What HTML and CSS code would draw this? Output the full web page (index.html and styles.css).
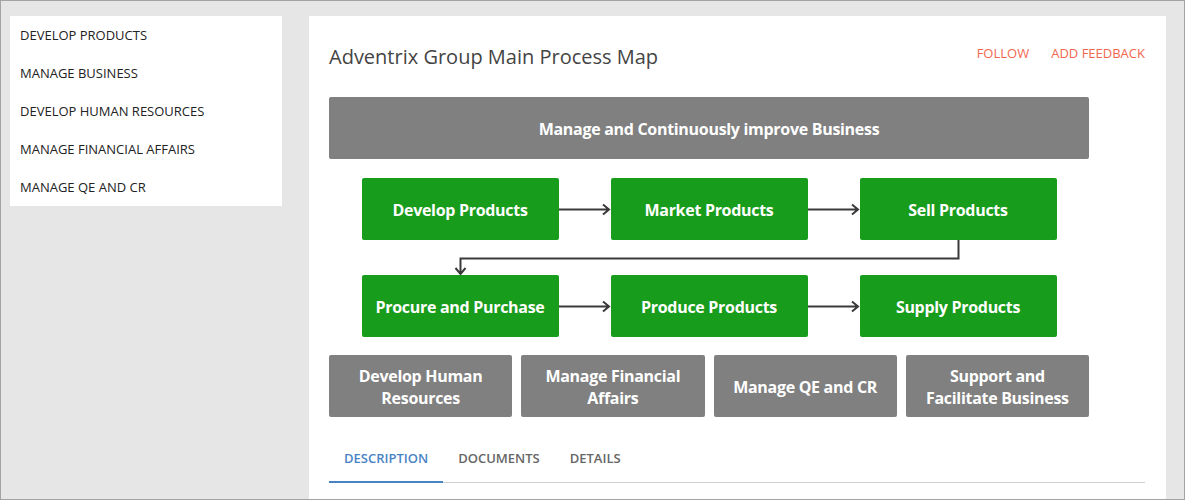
FILE: index.html
```html
<!DOCTYPE html>
<html lang="en">
<head>
    <meta charset="UTF-8">
    <meta name="viewport" content="width=device-width, initial-scale=1.0">
    <title>Adventrix Group Main Process Map</title>
    <link rel="stylesheet" href="styles.css">
</head>
<body>
    <div class="frame">
        <ul class="sidebar">
            <li>DEVELOP PRODUCTS</li>
            <li>MANAGE BUSINESS</li>
            <li>DEVELOP HUMAN RESOURCES</li>
            <li>MANAGE FINANCIAL AFFAIRS</li>
            <li>MANAGE QE AND CR</li>
        </ul>

        <div class="main">
            <div class="header">
                <h1 class="title">Adventrix Group Main Process Map</h1>
                <div class="actions">
                    <a href="#">FOLLOW</a>
                    <a href="#">ADD FEEDBACK</a>
                </div>
            </div>

            <div class="map">
                <div class="box box-gray box-top">Manage and Continuously improve Business</div>

                <div class="flow">
                    <div class="box box-green">Develop Products</div>
                    <svg class="arrow" viewBox="0 0 52 62"><path d="M0 31.5H50M44 26.5L50 31.5L44 36.5"/></svg>
                    <div class="box box-green">Market Products</div>
                    <svg class="arrow" viewBox="0 0 52 62"><path d="M0 31.5H50M44 26.5L50 31.5L44 36.5"/></svg>
                    <div class="box box-green">Sell Products</div>
                </div>

                <svg class="connector" viewBox="0 0 695 35"><path d="M596.5 0V18.5H98.5V34M93.5 28L98.5 34L103.5 28"/></svg>

                <div class="flow">
                    <div class="box box-green">Procure and Purchase</div>
                    <svg class="arrow" viewBox="0 0 52 62"><path d="M0 31.5H50M44 26.5L50 31.5L44 36.5"/></svg>
                    <div class="box box-green">Produce Products</div>
                    <svg class="arrow" viewBox="0 0 52 62"><path d="M0 31.5H50M44 26.5L50 31.5L44 36.5"/></svg>
                    <div class="box box-green">Supply Products</div>
                </div>

                <div class="support">
                    <div class="box box-gray">Develop Human<br>Resources</div>
                    <div class="box box-gray">Manage Financial<br>Affairs</div>
                    <div class="box box-gray">Manage QE and CR</div>
                    <div class="box box-gray">Support and<br>Facilitate Business</div>
                </div>
            </div>

            <div class="tabs">
                <span class="tab active">DESCRIPTION</span>
                <span class="tab">DOCUMENTS</span>
                <span class="tab">DETAILS</span>
            </div>
        </div>
    </div>
</body>
</html>
```

FILE: styles.css
```css
body {
    margin: 0;
    font-family: "Open Sans", "Liberation Sans", sans-serif;
    background-color: #e6e6e6;
}

.frame {
    height: 500px;
    box-sizing: border-box;
    border: 1px solid #a3a3a3;
    padding: 15px 18px 0 9px;
    display: flex;
    align-items: flex-start;
    gap: 27px;
    overflow: hidden;
}

.sidebar {
    width: 272px;
    flex-shrink: 0;
    margin: 0;
    padding: 0;
    list-style: none;
    background-color: #fff;
}

.sidebar li {
    height: 37px;
    line-height: 37px;
    padding: 1px 0 0 10px;
    font-size: 13px;
    color: #222;
}

.main {
    flex: 1;
    height: 484px;
    background-color: #fff;
    padding: 27px 21px 0 20px;
}

.header {
    display: flex;
    justify-content: space-between;
    align-items: flex-start;
}

.title {
    margin: 0;
    font-size: 20px;
    line-height: 28px;
    font-weight: 400;
    color: #444;
}

.actions {
    display: flex;
    gap: 22px;
    padding-top: 1px;
}

.actions a {
    font-size: 13px;
    line-height: 18px;
    color: #f26650;
    text-decoration: none;
}

.map {
    width: 760px;
    margin-top: 26px;
}

.box {
    height: 62px;
    box-sizing: border-box;
    padding-top: 2px;
    display: flex;
    align-items: center;
    justify-content: center;
    text-align: center;
    color: #fff;
    font-weight: 700;
    font-size: 16px;
    line-height: 22px;
    letter-spacing: -0.3px;
    border-radius: 2px;
}

.box-gray {
    background-color: #808080;
}

.box-green {
    background-color: #189c1b;
}

.flow {
    display: grid;
    grid-template-columns: 197px 52px 197px 52px 197px;
    width: 695px;
    margin: 19px auto 0;
}

.flow + .connector + .flow {
    margin-top: 0;
}

.arrow {
    width: 52px;
    height: 62px;
}

.arrow path,
.connector path {
    fill: none;
    stroke: #3a3a3a;
    stroke-width: 2;
}

.connector {
    display: block;
    width: 695px;
    height: 35px;
    margin: 0 auto;
}

.support {
    display: grid;
    grid-template-columns: repeat(4, 1fr);
    gap: 9px;
    margin-top: 18px;
}

.tabs {
    display: flex;
    margin-top: 19px;
    border-bottom: 1px solid #d0d0d0;
}

.tab {
    padding: 13px 15px 14px;
    font-size: 13px;
    line-height: 18px;
    font-weight: 600;
    color: #666;
    border-bottom: 2px solid transparent;
    margin-bottom: -1px;
}

.tab.active {
    color: #4a83c4;
    border-bottom-color: #4a83c4;
}
```
